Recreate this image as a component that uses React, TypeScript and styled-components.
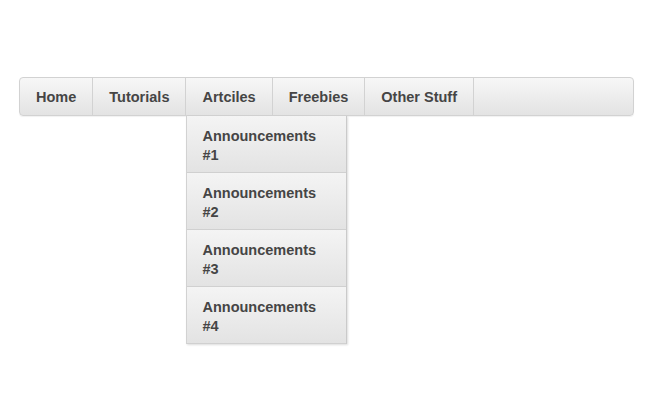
import { FC } from "react";
import styled, { createGlobalStyle } from "styled-components";

const GlobalStyle = createGlobalStyle`
	body {
		margin: 0;
		background: #ffffff;
		font-family: "Liberation Sans", Arial, sans-serif;
	}
`;

const navItems = ["Home", "Tutorials", "Artciles", "Freebies", "Other Stuff"];
const subItems = ["Announcements #1", "Announcements #2", "Announcements #3", "Announcements #4"];

const App: FC = () => {
	return (
		<Page>
			<GlobalStyle />
			<MenuBar>
				{navItems.map((item) => (
					<MenuItem key={item}>
						<MenuLink href="#">{item}</MenuLink>
						{item === "Artciles" && (
							<Dropdown>
								{subItems.map((sub) => (
									<DropdownItem key={sub}>
										<DropdownLink href="#">{sub}</DropdownLink>
									</DropdownItem>
								))}
							</Dropdown>
						)}
					</MenuItem>
				))}
			</MenuBar>
		</Page>
	);
};

const Page = styled.div`
	padding: 77px 16px 0 19px;
	height: 401px;
	box-sizing: border-box;
`;

const MenuBar = styled.ul`
	display: flex;
	list-style: none;
	margin: 0;
	padding: 0;
	height: 39px;
	box-sizing: border-box;
	border: 1px solid #d2d2d2;
	border-radius: 4px;
	background: linear-gradient(to bottom, #f7f7f7 0%, #e3e3e3 100%);
	box-shadow: 0 1px 1px rgba(0, 0, 0, 0.06);
`;

const MenuItem = styled.li`
	position: relative;
	display: flex;
	border-right: 1px solid #d2d2d2;
`;

const MenuLink = styled.a`
	display: flex;
	align-items: center;
	padding: 1px 16px 0 16px;
	font-size: 14.5px;
	font-weight: bold;
	color: #454545;
	text-decoration: none;
`;

const Dropdown = styled.ul`
	position: absolute;
	top: 38px;
	left: 0;
	width: 161px;
	margin: 0;
	padding: 0;
	list-style: none;
	box-sizing: border-box;
	border-left: 1px solid #d2d2d2;
	border-right: 1px solid #cacaca;
	box-shadow: 1px 1px 2px rgba(0, 0, 0, 0.14);
	z-index: 10;
`;

const DropdownItem = styled.li`
	border-bottom: 1px solid #d0d0d0;
	background: linear-gradient(to bottom, #f4f4f4 0%, #e3e3e3 100%);
`;

const DropdownLink = styled.a`
	display: block;
	height: 56px;
	box-sizing: border-box;
	padding: 11px 16px 0 15px;
	font-size: 14.5px;
	line-height: 19px;
	font-weight: bold;
	color: #454545;
	text-decoration: none;
`;

export default App;
